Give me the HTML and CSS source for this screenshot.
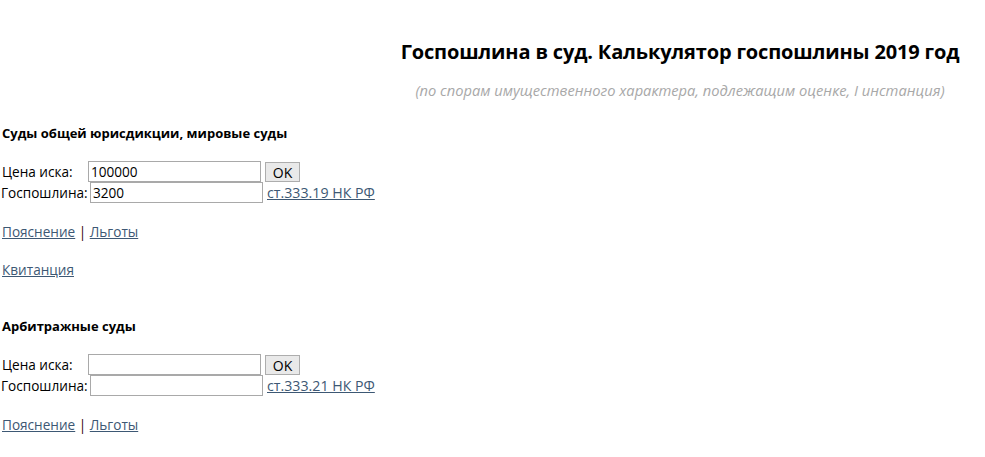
FILE: index.html
```html
<!DOCTYPE html>
<html lang="ru">
<head>
<meta charset="utf-8">
<link rel="stylesheet" href="styles.css">
</head>
<body>
<div class="header">
  <h1 class="title">Госпошлина в суд. Калькулятор госпошлины 2019 год</h1>
  <p class="subtitle">(по спорам имущественного характера, подлежащим оценке, I инстанция)</p>
</div>

<section class="calc calc-first">
  <h2 class="calc-title">Суды общей юрисдикции, мировые суды</h2>
  <div class="row">
    <span class="label label-price">Цена иска:</span>
    <input class="field" type="text" value="100000">
    <button class="ok">OK</button>
  </div>
  <div class="row">
    <span class="label label-fee">Госпошлина:</span>
    <input class="field" type="text" value="3200">
    <a class="link law" href="#">ст.333.19 НК РФ</a>
  </div>
  <p class="links"><a class="link" href="#">Пояснение</a> <span class="sep">|</span> <a class="link" href="#">Льготы</a></p>
  <p class="links links-receipt"><a class="link" href="#">Квитанция</a></p>
</section>

<section class="calc calc-second">
  <h2 class="calc-title">Арбитражные суды</h2>
  <div class="row">
    <span class="label label-price">Цена иска:</span>
    <input class="field" type="text" value="">
    <button class="ok">OK</button>
  </div>
  <div class="row">
    <span class="label label-fee">Госпошлина:</span>
    <input class="field" type="text" value="">
    <a class="link law" href="#">ст.333.21 НК РФ</a>
  </div>
  <p class="links"><a class="link" href="#">Пояснение</a> <span class="sep">|</span> <a class="link" href="#">Льготы</a></p>
</section>
</body>
</html>
```

FILE: styles.css
```css
html, body {
  margin: 0;
  padding: 0;
  background: #fff;
}
body {
  font-family: "Open Sans", "Noto Sans", sans-serif;
  font-size: 13.6px;
  color: #000;
}
.header {
  padding: 38px 0 0 375px;
  text-align: center;
}
.title {
  margin: 0;
  font-size: 20px;
  font-weight: 700;
  line-height: 28px;
  letter-spacing: -0.16px;
}
.subtitle {
  margin: 15px 0 0;
  font-size: 14.7px;
  font-style: italic;
  color: #a8a8a8;
  line-height: 18px;
}
.calc {
  padding-left: 2px;
}
.calc-first {
  margin-top: 25px;
}
.calc-second {
  margin-top: 38px;
}
.calc-title {
  margin: 0 0 19px;
  font-size: 13px;
  font-weight: 700;
  line-height: 18px;
}
.row {
  display: flex;
  align-items: center;
  height: 21px;
}
.label {
  display: inline-block;
  line-height: 18px;
  white-space: nowrap;
}
.label-price {
  width: 86px;
}
.label-fee {
  width: 89px;
  margin-left: -2px;
  padding-left: 1px;
}
.field {
  box-sizing: border-box;
  width: 173px;
  height: 21px;
  margin: 0;
  padding: 1px 2px;
  border: 1px solid #a9a9a9;
  font-family: inherit;
  font-size: 13.6px;
  color: #000;
  background: #fff;
}
.ok {
  box-sizing: border-box;
  margin-left: 4px;
  width: 35px;
  height: 20px;
  padding: 0;
  border: 1px solid #adadad;
  background: #e9e9e9;
  font-family: inherit;
  font-size: 14px;
  color: #000;
}
.link {
  color: #3d5874;
  text-decoration: underline;
}
.law {
  margin-left: 4px;
  font-size: 14.2px;
}
.links {
  margin: 20px 0 0;
  line-height: 18px;
}
.links-receipt {
  margin-top: 20px;
}
.sep {
  color: #330000;
}
```
